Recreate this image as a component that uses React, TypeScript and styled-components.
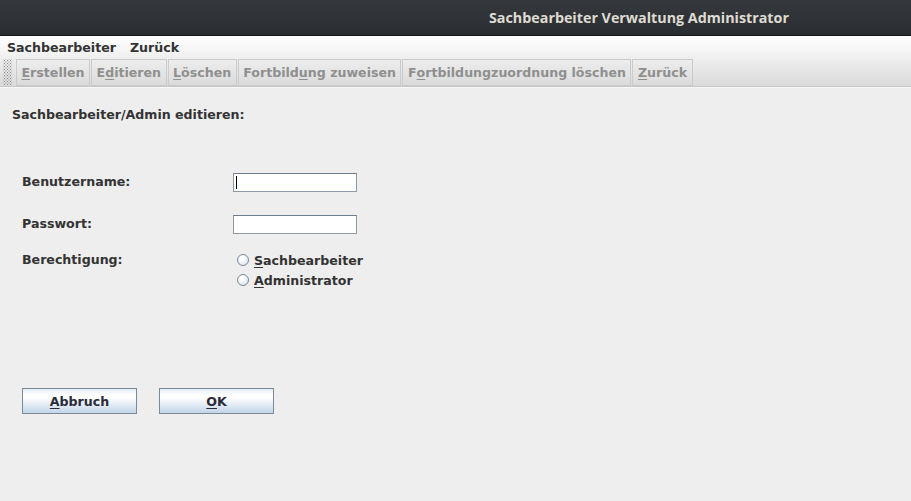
import React from "react";
import styled, { createGlobalStyle } from "styled-components";

const GlobalStyle = createGlobalStyle`
  html, body {
    margin: 0;
    padding: 0;
    background: #eeeeee;
  }
  #root {
    height: 501px;
  }
`;

const Window = styled.div`
  display: flex;
  flex-direction: column;
  height: 100%;
  background: #eeeeee;
  font-family: "DejaVu Sans", sans-serif;
  font-weight: 700;
  font-size: 12.6px;
  color: #333333;
`;

const TitleBar = styled.div`
  height: 35px;
  display: flex;
  align-items: center;
  padding-left: 489px;
  background: linear-gradient(#34383c, #2b2e31);
  border-bottom: 1px solid #151719;
  color: #dfdbd2;
  font-family: "Open Sans", "DejaVu Sans", sans-serif;
  font-size: 14.3px;
  font-weight: 700;
  white-space: nowrap;
`;

const Chrome = styled.div`
  display: flex;
  flex-direction: column;
  background: linear-gradient(#ffffff, #dadada);
  border-bottom: 1px solid #c6c6c6;
  box-shadow: 0 1px 0 #f8f8f8;
`;

const MenuBar = styled.div`
  height: 22px;
  display: flex;
  align-items: center;
`;

const MenuItem = styled.div`
  padding: 0 7px;
  color: #333333;
  white-space: nowrap;
`;

const ToolBar = styled.div`
  height: 28px;
  display: flex;
  align-items: center;
  padding-left: 3px;
  gap: 1px;
`;

const Grip = styled.div`
  width: 9px;
  height: 26px;
  margin-right: 3px;
  background-image: radial-gradient(circle, #8a8a8a 0.7px, transparent 0.8px),
    radial-gradient(circle, #8a8a8a 0.7px, transparent 0.8px);
  background-size: 3px 3px, 3px 3px;
  background-position: 0 0, 1.5px 1.5px;
`;

const ToolButton = styled.div`
  height: 25px;
  display: flex;
  align-items: center;
  padding: 0 4.5px;
  border: 1px solid #cbcbcb;
  color: #8f8f8f;
  white-space: nowrap;
`;

const Mn = styled.span`
  text-decoration: underline;
  text-underline-offset: 2px;
`;

const Content = styled.div`
  flex: 1;
  display: flex;
  flex-direction: column;
  padding: 20px 12px 0;
`;

const Heading = styled.div`
  line-height: 15px;
`;

const Form = styled.div`
  display: flex;
  flex-direction: column;
  padding-left: 10px;
  margin-top: 50px;
`;

const Row = styled.div<{ $gap?: number; $top?: boolean }>`
  display: flex;
  align-items: ${(p) => (p.$top ? "flex-start" : "center")};
  margin-top: ${(p) => p.$gap ?? 0}px;
`;

const Label = styled.div`
  width: 211px;
  line-height: 20px;
`;

const Field = styled.div<{ $focused?: boolean }>`
  position: relative;
  width: 122px;
  height: 17px;
  background: #ffffff;
  border: 1px solid #8c9aa8;
  border-top-color: #6e7d8b;
  ${(p) =>
    p.$focused &&
    `
    &::after {
      content: "";
      position: absolute;
      left: 2px;
      top: 2px;
      width: 1px;
      height: 13px;
      background: #000;
    }
  `}
`;

const RadioGroup = styled.div`
  display: flex;
  flex-direction: column;
`;

const RadioItem = styled.div`
  display: flex;
  align-items: center;
  height: 20px;
  gap: 5px;
  padding-left: 4px;
  color: #333333;
`;

const RadioDot = styled.span`
  width: 10px;
  height: 10px;
  border-radius: 50%;
  border: 1px solid #7d8a98;
  background: radial-gradient(circle at 40% 35%, #ffffff 20%, #c9d8e7 100%);
`;

const ButtonRow = styled.div`
  display: flex;
  gap: 22px;
  margin-top: 98px;
`;

const DialogButton = styled.div`
  width: 113px;
  height: 24px;
  display: flex;
  align-items: center;
  justify-content: center;
  border: 1px solid #7a8a99;
  background: linear-gradient(#e4edf6 0%, #ffffff 25%, #ffffff 35%, #c2d5e8 100%);
  color: #2a2a38;
`;

const toolItems: [string, number][] = [
  ["Erstellen", 0],
  ["Editieren", 1],
  ["Löschen", 0],
  ["Fortbildung zuweisen", 8],
  ["Fortbildungzuordnung löschen", 1],
  ["Zurück", 0],
];

const withMnemonic = (text: string, idx: number) => (
  <>
    {text.slice(0, idx)}
    <Mn>{text[idx]}</Mn>
    {text.slice(idx + 1)}
  </>
);

export default function App() {
  return (
    <>
      <GlobalStyle />
      <Window>
        <TitleBar>Sachbearbeiter Verwaltung Administrator</TitleBar>
        <Chrome>
          <MenuBar>
            <MenuItem>Sachbearbeiter</MenuItem>
            <MenuItem>Zurück</MenuItem>
          </MenuBar>
          <ToolBar>
            <Grip />
            {toolItems.map(([t, i]) => (
              <ToolButton key={t}>{withMnemonic(t, i)}</ToolButton>
            ))}
          </ToolBar>
        </Chrome>
        <Content>
          <Heading>Sachbearbeiter/Admin editieren:</Heading>
          <Form>
            <Row>
              <Label>Benutzername:</Label>
              <Field $focused />
            </Row>
            <Row $gap={22}>
              <Label>Passwort:</Label>
              <Field />
            </Row>
            <Row $gap={16} $top>
              <Label>Berechtigung:</Label>
              <RadioGroup>
                <RadioItem>
                  <RadioDot />
                  <span>{withMnemonic("Sachbearbeiter", 0)}</span>
                </RadioItem>
                <RadioItem>
                  <RadioDot />
                  <span>{withMnemonic("Administrator", 0)}</span>
                </RadioItem>
              </RadioGroup>
            </Row>
            <ButtonRow>
              <DialogButton>{withMnemonic("Abbruch", 0)}</DialogButton>
              <DialogButton>{withMnemonic("OK", 0)}</DialogButton>
            </ButtonRow>
          </Form>
        </Content>
      </Window>
    </>
  );
}
